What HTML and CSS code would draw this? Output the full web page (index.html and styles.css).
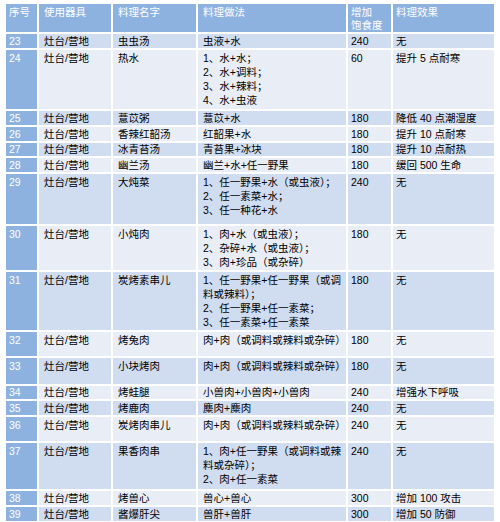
FILE: index.html
```html
<!DOCTYPE html>
<html lang="zh-CN">
<head>
<meta charset="utf-8">
<title>料理表</title>
<link rel="stylesheet" href="styles.css">
</head>
<body>
<table class="recipes">
  <thead>
    <tr class="head">
      <th class="c1">序号</th>
      <th class="c2">使用器具</th>
      <th class="c3">料理名字</th>
      <th class="c4">料理做法</th>
      <th class="c5">增加<br>饱食度</th>
      <th class="c6">料理效果</th>
    </tr>
  </thead>
  <tbody>
    <tr class="dark h14"><td class="num">23</td><td>灶台/营地</td><td>虫虫汤</td><td>虫液+水</td><td class="val">240</td><td class="eff">无</td></tr>
    <tr class="light h59"><td class="num">24</td><td>灶台/营地</td><td>热水</td><td>1、水+水；<br>2、水+调料；<br>3、水+辣料；<br>4、水+虫液</td><td class="val">60</td><td class="eff">提升 5 点耐寒</td></tr>
    <tr class="dark h14"><td class="num">25</td><td>灶台/营地</td><td>薏苡粥</td><td>薏苡+水</td><td class="val">180</td><td class="eff">降低 40 点潮湿度</td></tr>
    <tr class="light h14"><td class="num">26</td><td>灶台/营地</td><td>香辣红韶汤</td><td>红韶果+水</td><td class="val">180</td><td class="eff">提升 10 点耐寒</td></tr>
    <tr class="dark h13"><td class="num">27</td><td>灶台/营地</td><td>冰青苔汤</td><td>青苔果+冰块</td><td class="val">180</td><td class="eff">提升 10 点耐热</td></tr>
    <tr class="light h14"><td class="num">28</td><td>灶台/营地</td><td>幽兰汤</td><td>幽兰+水+任一野果</td><td class="val">180</td><td class="eff">缓回 500 生命</td></tr>
    <tr class="dark h50"><td class="num">29</td><td>灶台/营地</td><td>大炖菜</td><td>1、任一野果+水（或虫液）；<br>2、任一素菜+水；<br>3、任一种花+水</td><td class="val">240</td><td class="eff">无</td></tr>
    <tr class="light h44"><td class="num">30</td><td>灶台/营地</td><td>小炖肉</td><td>1、肉+水（或虫液）；<br>2、杂碎+水（或虫液）；<br>3、肉+珍品（或杂碎）</td><td class="val">180</td><td class="eff">无</td></tr>
    <tr class="dark h58"><td class="num">31</td><td>灶台/营地</td><td>炭烤素串儿</td><td>1、任一野果+任一野果（或调<br>料或辣料）；<br>2、任一野果+任一素菜；<br>3、任一素菜+任一素菜</td><td class="val">180</td><td class="eff">无</td></tr>
    <tr class="light h24"><td class="num">32</td><td>灶台/营地</td><td>烤兔肉</td><td>肉+肉（或调料或辣料或杂碎）</td><td class="val">180</td><td class="eff">无</td></tr>
    <tr class="dark h26"><td class="num">33</td><td>灶台/营地</td><td>小块烤肉</td><td>肉+肉（或调料或辣料或杂碎）</td><td class="val">180</td><td class="eff">无</td></tr>
    <tr class="light h13"><td class="num">34</td><td>灶台/营地</td><td>烤蛙腿</td><td>小兽肉+小兽肉+小兽肉</td><td class="val">240</td><td class="eff">增强水下呼吸</td></tr>
    <tr class="dark h14"><td class="num">35</td><td>灶台/营地</td><td>烤鹿肉</td><td>麋肉+麋肉</td><td class="val">240</td><td class="eff">无</td></tr>
    <tr class="light h24"><td class="num">36</td><td>灶台/营地</td><td>炭烤肉串儿</td><td>肉+肉（或调料或辣料或杂碎）</td><td class="val">240</td><td class="eff">无</td></tr>
    <tr class="dark h46"><td class="num">37</td><td>灶台/营地</td><td>果香肉串</td><td>1、肉+任一野果（或调料或辣<br>料或杂碎）；<br>2、肉+任一素菜</td><td class="val">240</td><td class="eff">无</td></tr>
    <tr class="light h14"><td class="num">38</td><td>灶台/营地</td><td>烤兽心</td><td>兽心+兽心</td><td class="val">300</td><td class="eff">增加 100 攻击</td></tr>
    <tr class="dark h14"><td class="num">39</td><td>灶台/营地</td><td>酱爆肝尖</td><td>兽肝+兽肝</td><td class="val">300</td><td class="eff">增加 50 防御</td></tr>
  </tbody>
</table>
</body>
</html>
```

FILE: styles.css
```css
html, body {
  margin: 0;
  padding: 0;
  background: #ffffff;
}

body {
  font-family: "Liberation Sans", "Noto Sans CJK SC", sans-serif;
  font-size: 10.5px;
  color: #000000;
  overflow: hidden;
}

.recipes {
  margin: 2px 0 0 4px;
  border-collapse: separate;
  border-spacing: 2px;
  table-layout: fixed;
  width: 492px;
}

.recipes th,
.recipes td {
  box-sizing: border-box;
  text-align: left;
  vertical-align: top;
  white-space: nowrap;
  overflow: hidden;
  padding: 1px 2px 0 5px;
  line-height: 14px;
  font-weight: normal;
}

.recipes th {
  background: #8db2e0;
  color: #ffffff;
  height: 28px;
  line-height: 13px;
  padding-top: 2px;
}

.c1 { width: 31px; }
.c2 { width: 72px; }
.c3 { width: 83px; }
.c4 { width: 148px; }
.c5 { width: 43px; }
.c6 { width: 101px; }

.recipes th.c1,
.recipes td.num {
  padding-left: 3px;
}

.recipes th.c5,
.recipes td.val {
  padding-left: 3px;
}

.recipes th.c6,
.recipes td.eff {
  padding-left: 3px;
}

.recipes td.num {
  background: #8db2e0;
  color: #ffffff;
}

.dark td { background: #d0dcf0; }
.light td { background: #e8edf6; }

.h13 td { height: 13px; padding-top: 0; line-height: 13px; }
.h14 td { height: 14px; padding-top: 0; }
.h24 td { height: 24px; }
.h26 td { height: 26px; }
.h44 td { height: 44px; }
.h46 td { height: 46px; }
.h50 td { height: 50px; }
.h58 td { height: 58px; }
.h59 td { height: 59px; }
```
